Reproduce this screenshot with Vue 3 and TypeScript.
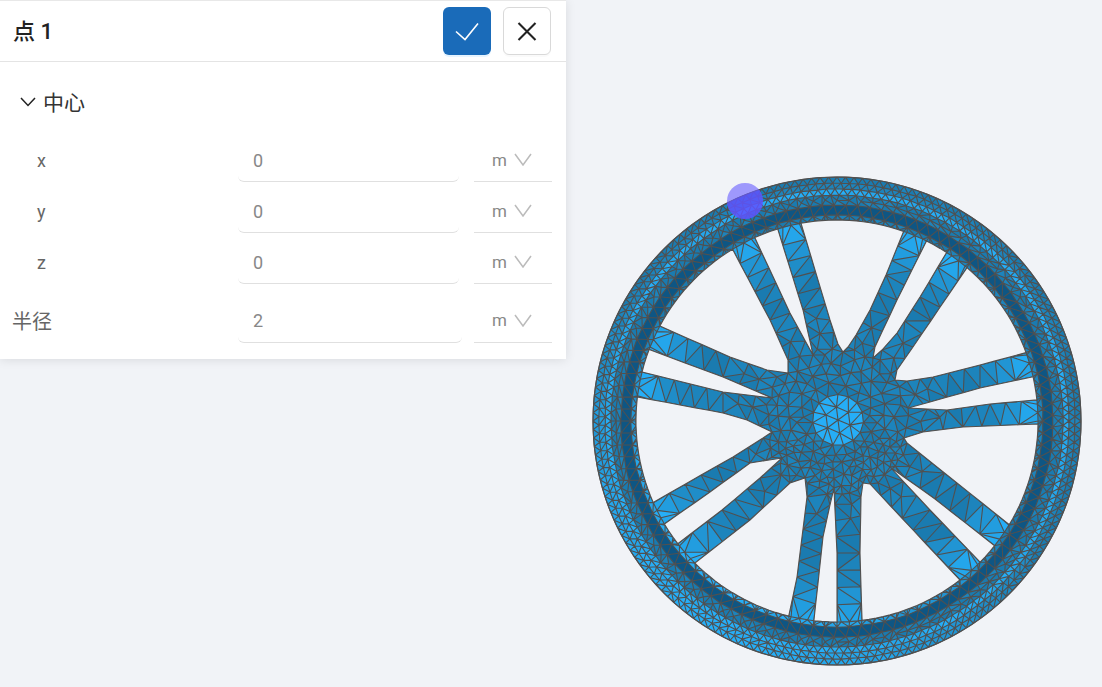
<script setup lang="ts">
// wheel mesh is generated once: delaunay over rim rings + spoke outlines
type Pt = [number, number];
interface Tri { a: number; b: number; c: number; cx: number; cy: number; r2: number }

const CX = 837;
const CY = 421;
const R_OUT = 244;
const R_IN = 201;

// background regions between the spokes, clockwise from the top
const gapOutlines: Pt[][] = [
  [[801, 223], [903, 233], [886, 275], [870, 310], [856, 335], [848, 347], [843, 352], [838, 344], [830, 320]],
  [[925, 244], [945, 255], [920, 297], [897, 333], [882, 350], [873, 358], [875, 347], [897, 300]],
  [[965, 270], [1025, 353], [980, 365], [933, 377], [907, 381], [895, 380], [897, 370], [913, 347]],
  [[1032, 377], [1036, 400], [990, 404], [947, 410], [908, 408], [930, 402], [980, 388]],
  [[1038, 424], [1010, 525], [957, 483], [907, 443], [904, 438], [923, 432], [963, 427]],
  [[995, 546], [981, 563], [930, 510], [890, 467], [935, 499]],
  [[960, 580], [862, 620], [860, 553], [861, 497], [863, 483], [870, 484], [913, 530]],
  [[837, 622], [814, 620], [823, 537], [830, 505], [834, 488], [837, 553]],
  [[789, 615], [696, 562], [750, 520], [790, 483], [805, 478], [807, 497], [797, 577]],
  [[680, 542], [666, 523], [710, 492], [750, 463], [782, 458], [760, 478], [722, 510]],
  [[654, 502], [637, 397], [680, 405], [723, 413], [747, 420], [772, 432], [763, 438], [733, 457]],
  [[642, 372], [648, 349], [685, 363], [723, 377], [772, 398], [723, 392]],
  [[658, 325], [733, 250], [770, 320], [788, 360], [788, 373], [767, 370], [730, 357]],
  [[755, 238], [778, 230], [803, 310], [813, 355], [790, 313]]
];

const hypot = (x: number, y: number) => Math.sqrt(x * x + y * y);

function makeRng(seed: number) {
  let s = seed;
  return () => {
    s = (s + 0x6d2b79f5) | 0;
    let t = Math.imul(s ^ (s >>> 15), 1 | s);
    t = (t + Math.imul(t ^ (t >>> 7), 61 | t)) ^ t;
    return ((t ^ (t >>> 14)) >>> 0) / 4294967296;
  };
}

function inPoly(p: Pt, poly: Pt[]) {
  let inside = false;
  for (let i = 0, j = poly.length - 1; i < poly.length; j = i++) {
    const [xi, yi] = poly[i];
    const [xj, yj] = poly[j];
    if (yi > p[1] !== yj > p[1] && p[0] < ((xj - xi) * (p[1] - yi)) / (yj - yi) + xi) inside = !inside;
  }
  return inside;
}

// walk the outline, follow the rim circle between two points that lie on it
function resample(outline: Pt[], step: number): Pt[] {
  const snapped = outline.map(([x, y]): Pt => {
    const r = hypot(x - CX, y - CY);
    if (r < 190) return [x, y];
    return [CX + ((x - CX) * R_IN) / r, CY + ((y - CY) * R_IN) / r];
  });
  const out: Pt[] = [];
  snapped.forEach((p, i) => {
    const q = snapped[(i + 1) % snapped.length];
    const onRim = hypot(p[0] - CX, p[1] - CY) > 195 && hypot(q[0] - CX, q[1] - CY) > 195;
    if (onRim) {
      const a = Math.atan2(p[1] - CY, p[0] - CX);
      let b = Math.atan2(q[1] - CY, q[0] - CX);
      if (b < a) b += Math.PI * 2;
      const n = Math.max(1, Math.round(((b - a) * R_IN) / 7));
      for (let k = 0; k < n; k++) {
        const t = a + ((b - a) * k) / n;
        out.push([CX + R_IN * Math.cos(t), CY + R_IN * Math.sin(t)]);
      }
    } else {
      const n = Math.max(1, Math.round(hypot(q[0] - p[0], q[1] - p[1]) / step));
      for (let k = 0; k < n; k++) {
        out.push([p[0] + ((q[0] - p[0]) * k) / n, p[1] + ((q[1] - p[1]) * k) / n]);
      }
    }
  });
  return out;
}

function circum(pts: Pt[], a: number, b: number, c: number): Tri {
  const [ax, ay] = pts[a];
  const [bx, by] = pts[b];
  const [cx, cy] = pts[c];
  const d = 2 * (ax * (by - cy) + bx * (cy - ay) + cx * (ay - by));
  const aa = ax * ax + ay * ay;
  const bb = bx * bx + by * by;
  const cc = cx * cx + cy * cy;
  const ux = (aa * (by - cy) + bb * (cy - ay) + cc * (ay - by)) / d;
  const uy = (aa * (cx - bx) + bb * (ax - cx) + cc * (bx - ax)) / d;
  return { a, b, c, cx: ux, cy: uy, r2: (ax - ux) ** 2 + (ay - uy) ** 2 };
}

// bowyer-watson, points sorted by x so finished triangles can be set aside
function delaunay(input: Pt[]): [number, number, number][] {
  const n = input.length;
  const pts = [...input].sort((p, q) => p[0] - q[0]);
  pts.push([-9000, -9000], [12000, -9000], [1000, 14000]);
  let open: Tri[] = [circum(pts, n, n + 1, n + 2)];
  const closed: Tri[] = [];
  for (let i = 0; i < n; i++) {
    const [x, y] = pts[i];
    const edges = new Map<string, [number, number]>();
    const keep: Tri[] = [];
    const add = (u: number, v: number) => {
      const key = u < v ? `${u}_${v}` : `${v}_${u}`;
      if (edges.has(key)) edges.delete(key);
      else edges.set(key, [u, v]);
    };
    for (const t of open) {
      const dx = x - t.cx;
      if (dx > 0 && dx * dx > t.r2) {
        closed.push(t);
        continue;
      }
      if (dx * dx + (y - t.cy) ** 2 < t.r2) {
        add(t.a, t.b);
        add(t.b, t.c);
        add(t.c, t.a);
      } else keep.push(t);
    }
    edges.forEach(([u, v]) => keep.push(circum(pts, u, v, i)));
    open = keep;
  }
  input.splice(0, n, ...pts.slice(0, n));
  return closed
    .concat(open)
    .filter((t) => t.a < n && t.b < n && t.c < n)
    .map((t): [number, number, number] => [t.a, t.b, t.c]);
}

// 0 = dark groove, 1 = bright face
function shade(x: number, y: number, noise: number) {
  const dx = x - CX;
  const dy = y - CY;
  const r = hypot(dx, dy);
  const lowerLeft = Math.max(0, (-dx * 0.55 + dy * 0.83) / r);
  if (r >= 206 && r < 216) return 0;
  let t: number;
  if (r < 25.5) t = 1;
  else if (r < 150) t = 0.45;
  else if (r < 175) t = 0.45 + ((r - 150) / 25) * 0.25;
  else if (r < 201) t = 0.7 + ((r - 175) / 26) * 0.3;
  else if (r < 206) t = 0.45 + lowerLeft * 0.55;
  else if (r < 226) t = 0.42;
  else if (r < 232) t = 0.95;
  else if (r < 238) t = 0.5 + lowerLeft * 0.5;
  else t = 0.42 + lowerLeft * 0.58;
  return Math.max(0, Math.min(1, t + noise));
}

function mix(a: number[], b: number[], t: number) {
  return a.map((v, i) => Math.round(v + (b[i] - v) * t));
}

function colorFor(t: number) {
  const dark = [14, 86, 132];
  const mid = [28, 128, 182];
  const bright = [38, 174, 247];
  const c = t < 0.45 ? mix(dark, mid, t / 0.45) : mix(mid, bright, (t - 0.45) / 0.55);
  return `rgb(${c[0]},${c[1]},${c[2]})`;
}

function buildWheel() {
  const rng = makeRng(7);
  const gaps = gapOutlines.map((g) => resample(g, 17));
  const points: Pt[] = [];
  gaps.forEach((g) => points.push(...g));
  const gapPointCount = points.length;

  // rim rings
  [244, 238, 232, 226, 221, 216, 206].forEach((r, ringIdx) => {
    const n = Math.round((Math.PI * 2 * r) / (ringIdx < 4 ? 8.5 : 12));
    for (let k = 0; k < n; k++) {
      const a = ((k + (ringIdx % 2) * 0.5) / n) * Math.PI * 2;
      const rr = r === 244 ? r : r + (rng() - 0.5) * 0.6;
      points.push([CX + rr * Math.cos(a), CY + rr * Math.sin(a)]);
    }
  });
  // inner rim circle, only where a spoke meets it
  for (let k = 0; k < 150; k++) {
    const a = (k / 150) * Math.PI * 2;
    const p: Pt = [CX + R_IN * Math.cos(a), CY + R_IN * Math.sin(a)];
    if (!gaps.some((g) => inPoly(p, g))) points.push(p);
  }
  // hub disc
  for (let k = 0; k < 15; k++) {
    const a = (k / 15) * Math.PI * 2 + 0.1;
    points.push([CX + 1 + 25.5 * Math.cos(a), CY - 1 + 25.5 * Math.sin(a)]);
  }
  for (let k = 0; k < 6; k++) {
    const a = (k / 6) * Math.PI * 2 + 0.4;
    points.push([CX + 1 + 13 * Math.cos(a), CY - 1 + 13 * Math.sin(a)]);
  }
  points.push([CX + 1, CY - 1]);

  // scatter inside hub area and spokes, denser toward the hub
  const spacing = (x: number, y: number) => {
    const r = hypot(x - CX, y - CY);
    if (r < 34) return 8;
    if (r < 75) return y > CY + 15 ? 6.5 : 9;
    if (r < 105) return 13;
    return 20;
  };
  for (let tries = 0; tries < 14000; tries++) {
    const a = rng() * Math.PI * 2;
    const r = 28 + rng() * 170;
    const p: Pt = [CX + r * Math.cos(a), CY + r * Math.sin(a)];
    if (gaps.some((g) => inPoly(p, g))) continue;
    const s = spacing(p[0], p[1]);
    let ok = true;
    for (let i = 0; i < points.length && ok; i++) {
      const d = hypot(points[i][0] - p[0], points[i][1] - p[1]);
      if (d < (i < gapPointCount ? s * 0.75 : s)) ok = false;
    }
    if (ok) points.push(p);
  }
  // break perfect co-circular cases
  points.forEach((p) => {
    p[0] += (rng() - 0.5) * 0.02;
    p[1] += (rng() - 0.5) * 0.02;
  });

  const tris = delaunay(points);
  const fills = new Map<string, string[]>();
  const seen = new Set<string>();
  const lines: string[] = [];
  const fmt = (p: Pt) => `${p[0].toFixed(1)} ${p[1].toFixed(1)}`;
  const line = (u: number, v: number) => {
    const key = u < v ? `${u}_${v}` : `${v}_${u}`;
    if (seen.has(key)) return;
    seen.add(key);
    lines.push(`M${fmt(points[u])}L${fmt(points[v])}`);
  };
  for (const [a, b, c] of tris) {
    const mx = (points[a][0] + points[b][0] + points[c][0]) / 3;
    const my = (points[a][1] + points[b][1] + points[c][1]) / 3;
    if (gaps.some((g) => inPoly([mx, my], g))) continue;
    const t = shade(mx, my, (rng() - 0.5) * 0.1);
    const color = colorFor(Math.round(t * 10) / 10);
    if (!fills.has(color)) fills.set(color, []);
    fills.get(color)!.push(`M${fmt(points[a])}L${fmt(points[b])}L${fmt(points[c])}Z`);
    line(a, b);
    line(b, c);
    line(c, a);
  }
  return {
    fills: [...fills.entries()].map(([color, parts]) => ({ color, d: parts.join('') })),
    wire: lines.join(''),
    gaps: gaps.map((g) => 'M' + g.map(fmt).join('L') + 'Z')
  };
}

const wheel = buildWheel();

const centerRows = [
  { label: 'x', value: '0' },
  { label: 'y', value: '0' },
  { label: 'z', value: '0' }
];
</script>

<template>
  <div class="viewport">
    <svg class="scene" viewBox="0 0 1102 687" width="1102" height="687">
      <defs>
        <clipPath id="wheel-disc">
          <circle :cx="CX" :cy="CY" :r="R_OUT" />
        </clipPath>
      </defs>
      <circle :cx="CX" :cy="CY" :r="R_OUT" fill="#1c80b6" />
      <path v-for="f in wheel.fills" :key="f.color" :d="f.d" :fill="f.color" />
      <path :d="wheel.wire" fill="none" stroke="#505050" stroke-width="1.1" />
      <path v-for="(g, i) in wheel.gaps" :key="i" :d="g" fill="#f1f3f7" stroke="#505050" stroke-width="1.1" />
      <circle :cx="CX" :cy="CY" :r="R_OUT" fill="none" stroke="#505050" stroke-width="1.1" />
      <circle cx="745" cy="201" r="18" fill="#6a5fff" opacity="0.62" />
      <circle cx="745" cy="201" r="18" fill="#5a50ff" opacity="0.6" clip-path="url(#wheel-disc)" />
    </svg>

    <div class="panel">
      <div class="panel-header">
        <span class="panel-title">点 1</span>
        <div class="header-actions">
          <button class="icon-btn primary" type="button">
            <svg viewBox="0 0 48 48" width="48" height="48">
              <path d="M13 24.5 L22 32.5 L35 16.5" fill="none" stroke="#fff" stroke-width="1.6" />
            </svg>
          </button>
          <button class="icon-btn" type="button">
            <svg viewBox="0 0 46 46" width="46" height="46">
              <path d="M14.5 15 L31.5 32 M31.5 15 L14.5 32" fill="none" stroke="#222" stroke-width="2.1" />
            </svg>
          </button>
        </div>
      </div>

      <div class="panel-body">
        <div class="section-head">
          <svg viewBox="0 0 16 10" width="16" height="10">
            <path d="M1 1 L8 8.5 L15 1" fill="none" stroke="#222" stroke-width="1.5" />
          </svg>
          <span>中心</span>
        </div>

        <div v-for="row in centerRows" :key="row.label" class="row nested">
          <span class="row-label">{{ row.label }}</span>
          <input class="value-input" :value="row.value" readonly />
          <div class="unit">
            <span>m</span>
            <svg viewBox="0 0 18 13" width="18" height="13">
              <path d="M1 1 L9 12 L17 1" fill="none" stroke="#bbb" stroke-width="1.5" />
            </svg>
          </div>
        </div>

        <div class="row radius">
          <span class="row-label">半径</span>
          <input class="value-input" value="2" readonly />
          <div class="unit">
            <span>m</span>
            <svg viewBox="0 0 18 13" width="18" height="13">
              <path d="M1 1 L9 12 L17 1" fill="none" stroke="#bbb" stroke-width="1.5" />
            </svg>
          </div>
        </div>
      </div>
    </div>
  </div>
</template>

<style scoped>
.viewport { position: relative; width: 1102px; height: 687px; overflow: hidden; background: #f1f3f7; font-family: "Roboto", "Noto Sans CJK SC", sans-serif; }
.scene { position: absolute; left: 0; top: 0; }
.panel { position: relative; width: 566px; background: #fff; border-top: 1px solid #e8e8e8; box-shadow: 0 1px 10px rgba(0, 0, 0, 0.1); }

.panel-header { height: 60px; display: flex; align-items: center; justify-content: space-between; padding: 0 15px 0 13px; border-bottom: 1px solid #e4e4e4; }
.panel-title { font-size: 22px; font-weight: 500; color: #222; line-height: 1; margin-top: 1px; }
.header-actions { display: flex; gap: 12px; }
.icon-btn { width: 48px; height: 48px; padding: 0; background: #fff; border: 1px solid #d9d9d9; border-radius: 6px; box-shadow: 0 2px 0 rgba(0, 0, 0, 0.02); display: flex; align-items: center; justify-content: center; }
.icon-btn.primary { background: #1a6bb9; border: none; box-shadow: 0 2px 0 rgba(5, 145, 255, 0.1); }

.panel-body { padding: 21px 14px 16px 0; display: flex; flex-direction: column; gap: 10px; }
.section-head { height: 41px; margin-bottom: 7px; padding-left: 20px; display: flex; align-items: center; gap: 7px; font-size: 21px; color: #333; }
.section-head span { margin-top: -5px; }
.section-head svg { margin-top: -4px; }

.row { display: grid; grid-template-columns: 223px 221px 78px; column-gap: 15px; height: 41px; }
.row.radius { grid-template-columns: 226px 224px 78px; column-gap: 12px; height: 42px; margin-top: 7px; }
.row-label { display: flex; align-items: center; font-size: 18px; color: #666; padding-left: 12px; padding-bottom: 2px; }
.radius .row-label { font-size: 20px; padding-bottom: 3px; }
.nested .row-label { padding-left: 37px; }
.value-input { width: 100%; box-sizing: border-box; height: 100%; padding: 0 15px 2px; border: none; border-bottom: 1px solid #e0e0e0; border-radius: 6px; outline: none; background: #fff; font-family: inherit; font-size: 18px; color: #888; }
.unit { display: flex; align-items: center; gap: 7px; padding-left: 18px; padding-bottom: 3px; border-bottom: 1px solid #e0e0e0; font-size: 17px; color: #888; }
</style>
